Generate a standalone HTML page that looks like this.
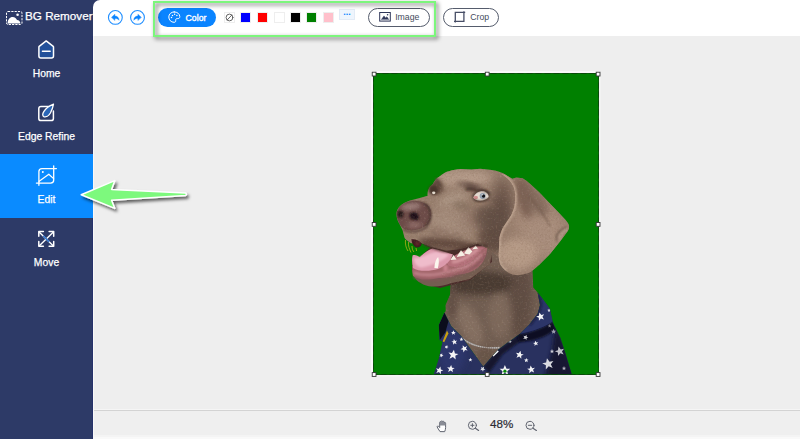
<!DOCTYPE html>
<html><head><meta charset="utf-8">
<style>
*{box-sizing:border-box;margin:0;padding:0}
html,body{width:800px;height:439px;overflow:hidden;background:#eee;font-family:"Liberation Sans",Arial,sans-serif}
#side{position:absolute;left:0;top:0;width:101px;height:439px;background:#2d3a67}
#top{position:absolute;left:93px;top:0;width:707px;height:36px;background:#fff;border-top-left-radius:7px}
#main{position:absolute;left:93px;top:36px;width:707px;height:403px;background:#eee}
#bot{position:absolute;left:93px;top:409px;width:707px;height:30px;background:linear-gradient(#f5f5f5 0,#f5f5f5 1px,#d3d3d3 1px,#d3d3d3 2px,#efefef 2px,#efefef 26px,#f4f4f4 26px,#f4f4f4 28px,#f9f9f9 28px)}
.logo{position:absolute;left:25px;top:8.4px;color:#fff;font-size:11.7px;white-space:nowrap;line-height:16px;-webkit-text-stroke:.25px #fff}
.item{position:absolute;left:0;width:93px;height:63px;color:#fff;text-align:center;font-size:10.35px}
.item span{position:absolute;left:0;width:93px;text-align:center;top:39.8px;line-height:12px;-webkit-text-stroke:.25px #fff}
.item svg{position:absolute}
.act{background:#0a8bff}
.abs{position:absolute}
.btn{position:absolute;top:8px;height:19px;border-radius:10px;font-size:8.7px;line-height:17px;color:#444b5c;border:1px solid #555c6c;background:#fff}
.sw{position:absolute;top:12px;width:11px;height:11px;border:1px solid #eee;background:#fff}
.sw i{position:absolute;left:0;top:0;width:9px;height:9px}
</style></head><body>
<div id="side"></div>
<div id="top"></div>
<div id="main"></div>
<div id="bot"></div>
<div class="abs" style="left:92px;top:36px;width:1px;height:403px;background:#26326a"></div><div class="abs" style="left:93px;top:36px;width:1px;height:403px;background:#f8f8f8"></div>

<!-- sidebar -->
<div class="logo">BG Remover</div>
<div class="item" style="top:28px"><span>Home</span></div>
<div class="item" style="top:91px"><span>Edge Refine</span></div>
<div class="item act" style="top:154.3px;height:63.3px"><span>Edit</span></div>
<div class="item" style="top:217px"><span>Move</span></div>


<!-- icons -->
<svg class="abs" style="left:0;top:0" width="93" height="290" viewBox="0 0 93 290" fill="none" stroke="#fff" stroke-linecap="round" stroke-linejoin="round">
<!-- logo -->
<rect x="6.5" y="11.5" width="15.5" height="13" rx="1.5" stroke-width="1" stroke-dasharray="2.2 1.1" stroke-linecap="butt"/>
<path d="M7.6 23.6 C7.6 19.5 10 17 12.6 17 C15 17 16.4 18.6 17 20 C19 20 20.4 21.6 20.4 23.6 Z" fill="#fff" stroke="none"/>
<circle cx="17.6" cy="14.7" r="1.3" fill="#fff" stroke="none"/>
<!-- home -->
<path d="M46.2 40.9 L53.2 46.4 Q53.5 46.7 53.5 47.2 L53.5 56 Q53.5 58 51.5 58 L40.9 58 Q38.9 58 38.9 56 L38.9 47.2 Q38.9 46.7 39.2 46.4 Z" fill="#22509a" stroke-width="1.5"/>
<path d="M42.4 51.3 H50.2" stroke-width="1.4"/>
<!-- edge refine -->
<path d="M49.5 106.4 H41 Q38.8 106.4 38.8 108.6 V118.4 Q38.8 120.6 41 120.6 H51.2 Q53.4 120.6 53.4 118.4 V111" stroke-width="1.5"/>
<path d="M53.5 104.1 C50.2 105.4 45.8 108.4 43.8 111.6 C42.3 114 42.4 116.2 43.8 116.7 C45.8 117.3 48.8 115.8 50.4 113 C52 110 53 107 53.5 104.1 Z" fill="#2a66b8" stroke-width="1.3"/>
<!-- edit -->
<path d="M56.4 168.6 H42 Q38.9 168.6 38.9 171.6 V185.3 M36.4 183.1 H50.6 Q53.7 183.1 53.7 180 V165.8" stroke-width="1.3"/>
<circle cx="42.8" cy="172.1" r="1" fill="#fff" stroke="none"/>
<path d="M39.2 181.3 L48.8 174.2 L53.6 178.6" stroke-width="1.2"/>
<!-- move -->
<path d="M39.6 232.4 L52.9 245.4 M52.9 232.4 L39.6 245.4" stroke-width="1.4"/>
<path d="M43.6 236.3 L46.2 238.9 L48.8 241.4" stroke="#3478d0" stroke-width="1.5"/>
<path d="M38.8 236.2 V231.6 H43.4 M49.1 231.6 H53.7 V236.2 M53.7 241.6 V246.2 H49.1 M43.4 246.2 H38.8 V241.6" stroke-width="1.5"/>
</svg>

<!-- toolbar -->
<div class="abs" style="left:158px;top:8px;width:58px;height:19px;border-radius:10px;background:#0a84ff;color:#fff;font-size:8.7px;line-height:19px;-webkit-text-stroke:.35px #fff"><span style="position:absolute;left:27.6px;top:.6px">Color</span></div>
<div class="sw" style="left:224px"></div>
<div class="sw" style="left:240px"><i style="background:#0000ff"></i></div>
<div class="sw" style="left:257px"><i style="background:#ff0000"></i></div>
<div class="sw" style="left:274px"><i style="background:#fff"></i></div>
<div class="sw" style="left:290px"><i style="background:#000"></i></div>
<div class="sw" style="left:306px"><i style="background:#008000"></i></div>
<div class="sw" style="left:323px"><i style="background:#ffc0cb"></i></div>
<div class="abs" style="left:339px;top:9px;width:16px;height:11px;background:#eef5fd;border:1px solid #e3ebf5;color:#0a84ff;font-size:9px;line-height:5px;text-align:center;font-weight:bold">...</div>
<div class="btn" style="left:368px;width:62px"><span style="position:absolute;left:26.2px">Image</span></div>
<div class="btn" style="left:443px;width:56px"><span style="position:absolute;left:26.3px">Crop</span></div>


<svg class="abs" style="left:100px;top:0" width="410" height="36" viewBox="100 0 410 36" fill="none" stroke-linecap="round" stroke-linejoin="round">
<!-- undo/redo -->
<circle cx="115.35" cy="17.4" r="6.9" stroke="#1f8eff" stroke-width="1.1"/>
<circle cx="137.5" cy="17.4" r="6.9" stroke="#1f8eff" stroke-width="1.1"/>
<path d="M111.6 17.2 L114.9 14.2 V16 C117.6 16.1 119 17.8 119 20.3 C118.2 19 117 18.5 114.9 18.5 V20.2 Z" fill="#0a84ff" stroke="#0a84ff" stroke-width=".4"/>
<path d="M141.2 17.2 L137.9 14.2 V16 C135.2 16.1 133.8 17.8 133.8 20.3 C134.6 19 135.8 18.5 137.9 18.5 V20.2 Z" fill="#0a84ff" stroke="#0a84ff" stroke-width=".4"/>
<!-- palette -->
<path d="M174.2 11.9 C171 11.9 168.8 14.2 168.8 17 C168.8 19.9 171 22.3 174 22.3 C175.4 22.3 175.9 21.5 175.7 20.6 C175.4 19.3 176.1 18.5 177.3 18.6 C179 18.8 179.8 18 179.8 16.6 C179.8 14 177.4 11.9 174.2 11.9 Z" stroke="#fff" stroke-width="1"/>
<g fill="#fff" stroke="none"><circle cx="171.5" cy="17.6" r=".75"/><circle cx="172.5" cy="15.4" r=".75"/><circle cx="174.6" cy="14.2" r=".75"/><circle cx="176.9" cy="15.6" r=".75"/></g>
<!-- no color -->
<circle cx="229.5" cy="17.5" r="3.4" stroke="#555" stroke-width=".9"/><path d="M227.2 19.9 L231.8 15.1" stroke="#555" stroke-width=".9"/>
<!-- image icon -->
<rect x="379.7" y="12.5" width="10.6" height="8.6" stroke="#2d3558" stroke-width="1" stroke-linejoin="miter"/>
<path d="M381.6 19.3 L384 15.9 L385.6 18 L386.9 16.8 L388.6 19.3 Z" fill="#2d3558" stroke="#2d3558" stroke-width=".5"/>
<circle cx="387.6" cy="14.7" r=".8" fill="#2d3558"/>
<!-- crop icon -->
<path d="M463.9 11.3 V21.3 H454 M455.3 22.6 V12.3 H465.2" stroke="#474e66" stroke-width="1.3" stroke-linecap="butt" stroke-linejoin="miter"/>
</svg>

<!-- highlight -->
<div class="abs" style="left:153px;top:1px;width:283.3px;height:36px;border:2px solid #7cf67c;filter:drop-shadow(2px 2px 2.2px rgba(0,0,0,.6))"></div>

<!-- canvas image -->
<svg class="abs" style="left:366px;top:66px" width="240" height="316" viewBox="366 66 240 316">
<defs>
<filter id="b1" x="-30%" y="-30%" width="160%" height="160%"><feGaussianBlur stdDeviation="1"/></filter>
<filter id="b2" x="-30%" y="-30%" width="160%" height="160%"><feGaussianBlur stdDeviation="2"/></filter>
<filter id="b3" x="-30%" y="-30%" width="160%" height="160%"><feGaussianBlur stdDeviation="3.5"/></filter>
<filter id="b5" x="-40%" y="-40%" width="180%" height="180%"><feGaussianBlur stdDeviation="6"/></filter>
<filter id="fur" x="0" y="0" width="100%" height="100%"><feTurbulence type="fractalNoise" baseFrequency=".55" numOctaves="2" seed="3" result="n"/><feColorMatrix in="n" type="matrix" values="0 0 0 0 .22  0 0 0 0 .13  0 0 0 0 .08  0 0 0 2.2 -1.05"/></filter>
<filter id="fur2" x="0" y="0" width="100%" height="100%"><feTurbulence type="fractalNoise" baseFrequency=".5" numOctaves="2" seed="8" result="n"/><feColorMatrix in="n" type="matrix" values="0 0 0 0 .88  0 0 0 0 .74  0 0 0 0 .62  0 0 0 2.2 -1.25"/></filter>
<clipPath id="cfur"><use href="#headp"/><use href="#earp"/><use href="#neckp"/></clipPath>
<path id="headp" d="M396.5 213 C397 208 401 203.5 410 200.4 L418.8 198.2 L427.6 195.7 C427 190 430 186 432.6 184.4 C435 180 437 178 440 176.3 C444 173 446 172 448.9 171.3 C453 169.8 457 169.2 460.2 169 L471.5 169.4 L480.2 168.8 L490 169.8 L495 170.6 C500 172 503 173 505 174.4 L512 178.8 L520 200 L512 240 L505 262 L487 248 L477.7 243.8 L460.2 248.9 L446.4 250.7 L431.4 247 L422 243.2 L411 243.2 C407 241 405 239 404.4 237.6 L402.5 230 L399.4 223.8 C397 220 396.3 216 396.5 213 Z"/>
<path id="earp" d="M512 178.8 L516.3 177.5 L522.6 178.2 C526 180 528 182 530 183.8 L538.9 192 L547.7 201.3 L557.7 211.4 L565.2 219.5 C568 223 569.5 225 569 226.8 C569 229 568.5 230 567.7 231.3 L560.2 241.3 L550.2 253.8 L540.2 263.9 L533.9 269.5 C530 272.5 528 273.5 525.2 273.8 C521 275.3 518 275.3 515.2 275 C511 274 508.5 273 506.4 271.3 C503 268.5 501 266 500 263.8 C498.6 259 498.6 256 498.8 252.6 L499.4 237.6 C500.5 233 502 229 503.8 226.3 L511.3 215 C514 209 515 205 515 202.6 C515.5 196 515 191 513.8 187.6 C511 181 506 176.5 501 174 L505 174.4 Z"/>
<path id="neckp" d="M450.8 283.2 L450 295 L445.6 305 L445.7 311.3 L444.4 312.5 L451.3 326.3 L461.4 336.3 L483.3 366.4 L497.7 350 L507.7 342.6 L520 333.8 L528.8 325 L537.6 313.8 L540 305 L537.6 292.5 L533.2 287.5 L532.5 269 L520 240 L480 250 L440 275 Z"/>
<path id="shirtp" d="M444.4 312.5 L438.8 325 L439.4 340 L442.6 341.4 L438.8 358.8 L433.6 374.5 L571.8 374.5 L565.2 352.6 L560.2 337.5 L553.9 325 L552.6 321.4 L550 308.8 L542.6 298.8 L537.6 292.5 L540 305 L537.6 313.8 L528.8 325 L520 333.8 L507.7 342.6 L497.7 350 L483.3 366.4 L461.4 336.3 L451.3 326.3 Z"/>
<clipPath id="chead"><use href="#headp"/></clipPath>
<clipPath id="cear"><use href="#earp"/></clipPath>
<clipPath id="cneck"><use href="#neckp"/></clipPath>
<clipPath id="cshirt"><use href="#shirtp"/></clipPath>
<clipPath id="cimg"><rect x="373" y="73" width="226" height="302"/></clipPath>
<path id="st" d="M0 -1 L0.29 -0.31 L0.95 -0.31 L0.42 0.12 L0.59 0.81 L0 0.4 L-0.59 0.81 L-0.42 0.12 L-0.95 -0.31 L-0.29 -0.31 Z"/>
</defs>
<!-- halo + green -->
<path d="M372 376 V72 H600" fill="none" stroke="#f8f8f8" stroke-width="2"/><path d="M600 72 V376 H372" fill="none" stroke="#f2f2f2" stroke-width="2"/>
<rect x="373" y="73" width="226" height="302" fill="#008000"/>
<g clip-path="url(#cimg)">
<!-- neck -->
<use href="#neckp" fill="#715e52"/>
<g clip-path="url(#cneck)">
<ellipse cx="478" cy="283" rx="40" ry="12" fill="#4a3b33" filter="url(#b3)"/>
<ellipse cx="520" cy="300" rx="12" ry="40" fill="#5b4a40" filter="url(#b3)" opacity=".8"/>
<ellipse cx="470" cy="325" rx="10" ry="22" fill="#8a7566" filter="url(#b3)" opacity=".8" transform="rotate(-25 470 325)"/>
<ellipse cx="500" cy="315" rx="12" ry="22" fill="#836e60" filter="url(#b3)" opacity=".7"/>
<ellipse cx="452" cy="300" rx="5" ry="18" fill="#5e4c42" filter="url(#b2)" opacity=".7"/>
<path d="M460.6 337 C467 342.4 474 345.6 482 347 C488 348 494 348.2 500 347.6" stroke="#8f8a88" stroke-width="1.7" fill="none"/><path d="M460.6 337 C467 342.4 474 345.6 482 347 C488 348 494 348.2 500 347.6" stroke="#d8d4d0" stroke-width="1" fill="none" stroke-dasharray="1.1 .9"/>
<ellipse cx="486" cy="358" rx="9" ry="10" fill="#665246" filter="url(#b2)" opacity=".8"/>
</g>
<!-- shirt -->
<use href="#shirtp" fill="#29315f"/>
<g clip-path="url(#cshirt)">
<path d="M556 322 L578 380 L544 380 L552 350 Z" fill="#14172e" filter="url(#b2)" opacity=".9"/>
<ellipse cx="452" cy="352" rx="14" ry="22" fill="#2f3970" filter="url(#b3)" opacity=".8"/>
<path d="M444.4 312.5 L438.8 325 L439.8 340 L445.5 332 L448.5 321 Z" fill="#0b0d1c"/>
<path d="M447 330.5 L442.6 341.6 L444.2 342.2 L448.4 333.6 Z" fill="#c9a010"/>
<path d="M483.3 366.4 L497.7 350 L520 333.8 L525 338 L503 354 L489 373 Z" fill="#12152e" filter="url(#b1)"/>
<path d="M517 335 C530 333 542 329 553.4 321.6 L556 329 C546 337 532 342 519 342 Z" fill="#0b0d20" filter="url(#b1)"/>
<path d="M537.6 292.5 L542.6 298.8 L550 308.8 L552.8 321.6 C546 326.4 534 331 520 333.8 L528.8 325 L537.6 313.8 L540 305 Z" fill="#2c3568"/>
<path d="M538.6 294 L541 305 L538.6 314 L530 325" stroke="#151935" stroke-width="1.6" fill="none" filter="url(#b1)"/>
<g fill="#f4f4f6">
<use href="#st" transform="translate(453.2 354.9) scale(5.3) rotate(8)"/>
<use href="#st" transform="translate(454.4 342) scale(3.1) rotate(-10)"/>
<use href="#st" transform="translate(453.4 332.7) scale(2.5)"/>
<use href="#st" transform="translate(464.3 348.7) scale(3.8) rotate(-25)"/>
<use href="#st" transform="translate(461.4 339.4) scale(2.1) rotate(10)"/>
<use href="#st" transform="translate(450.8 368.9) scale(4) rotate(5)"/>
<use href="#st" transform="translate(439.4 370.4) scale(4) rotate(15)"/>
<use href="#st" transform="translate(470.4 359.8) scale(2.1)"/>
<use href="#st" transform="translate(446.5 347) scale(2.1) rotate(20)"/>
<use href="#st" transform="translate(441.4 355.4) scale(2.2) rotate(20)"/>
<use href="#st" transform="translate(504.9 370.6) scale(5.6) rotate(0)"/>
<use href="#st" transform="translate(519.6 354.9) scale(4.2) rotate(12)"/>
<use href="#st" transform="translate(535.8 343.4) scale(2.8) rotate(-10)"/>
<use href="#st" transform="translate(525.6 337.4) scale(2.8) rotate(20)" opacity=".85"/>
<use href="#st" transform="translate(526.3 360.3) scale(2.4)"/>
<use href="#st" transform="translate(531.2 369.6) scale(4.2) rotate(-8)"/>
<use href="#st" transform="translate(548.2 364) scale(6) rotate(-12)" opacity=".88"/>
<use href="#st" transform="translate(559.8 351.4) scale(5) rotate(-15)" opacity=".78"/>
<use href="#st" transform="translate(552 351.4) scale(2.3)" opacity=".8"/>
<use href="#st" transform="translate(564 368.4) scale(2.3)" opacity=".7"/>
<use href="#st" transform="translate(510 341.5) scale(2) rotate(10)" opacity=".7"/>
<use href="#st" transform="translate(540.5 316.7) scale(4.4) rotate(-15)"/>
<use href="#st" transform="translate(549 310.4) scale(1.9)" opacity=".85"/>
<use href="#st" transform="translate(553.6 331.6) scale(2.8)" opacity=".6"/>
<use href="#st" transform="translate(549.6 326) scale(2)" opacity=".5"/>
<use href="#st" transform="translate(482.7 369) scale(2.8) rotate(30)" opacity=".85"/>
<path d="M492.4 355.4 L497.6 350.2 L498.8 351.4 L493.6 356.6 Z"/>
</g>
<circle cx="504.9" cy="371.2" r="1.6" fill="#0a8a0a"/>
</g>
<!-- mouth interior -->
<path d="M411 243 L490 243 L492 262 L470 280 L440 288 L420 283 L412 270 L412.7 255 L419.5 257.5 L430.3 247.5 L422 243.2 Z" fill="#4a2c2a"/>
<!-- lower jaw fur -->
<path d="M412.2 270 C413 277 417 281 420 282.6 C425 286 429 286.6 432.6 286.4 C440 286.5 446 285 450.8 283.2 L470 279 L490 264 L493 246 L484 248 L470 262 L440 270 Z" fill="#745d51"/>
<!-- gums inner -->
<path d="M446 262 C452 256 462 251 474 246.5 L485 246 C486 254 480 264 468 270 L452 274 Z" fill="#b4707a"/>
<path d="M452 262 C460 262 470 256 478 249" stroke="#d3969c" stroke-width="3" fill="none" filter="url(#b1)"/>
<!-- lower lip mass -->
<path d="M412.4 266 C420 271 430 270 438 268 L446 263 C448 266 452 267.5 458 267 C468 265 476 259 481 250 L487 246.5 C487.4 254 484 262 479 266.5 C475 270 470 272.4 465 273.4 L456 275 C450 277.4 444 278.2 439 278 C432 279.6 426 279.8 422 279.4 C417 278.4 414 277 413 276 C412.3 273 412.2 269 412.4 266 Z" fill="#a4676c"/>
<path d="M414 273 C424 276 438 275 450 271 C462 269.5 474 264 482 254" stroke="#c48890" stroke-width="2.2" fill="none" filter="url(#b1)"/>
<path d="M413.5 277 C422 281 438 280.4 452 276.4 C466 273 478 268 486 254" stroke="#84545a" stroke-width="1.6" fill="none" filter="url(#b1)"/>
<ellipse cx="445.5" cy="268" rx="2.2" ry="3.6" fill="#c9848e" filter="url(#b1)"/>
<!-- tongue -->
<path d="M412.7 255.2 C416 254.5 418 256 419.8 257.2 C424 253 428 250 432.3 248.4 C440 250 447 252.5 453 254.6 L450 260 C447 264 443 267 438 269 C430 271.6 418 271.6 413 268 C411.8 263 411.9 258 412.7 255.2 Z" fill="#dc9aac"/>
<path d="M414 258 C420 259 428 253 436 252 C442 252.4 446 253.4 449 255 C444 260 434 265 422 267.6 C416 267 413.6 262 414 258 Z" fill="#efbccb" filter="url(#b1)"/>
<!-- teeth -->
<path d="M434.4 268 C434.6 262.6 436 258.8 438.2 257 C439.2 260 439 264.4 437.8 268.2 Z" fill="#fbf7ee"/>
<path d="M450.5 260 L453.5 255 L456.5 259.4 Z M456.6 257 L461 250 L465.2 255.6 Z M464 253.4 L468.4 247 L472.4 251.4 L469.4 254.4 Z M472 249.6 L475.6 245.4 L478 248.6 Z" fill="#f6f0e4"/>
<!-- head -->
<use href="#headp" fill="#987f6e"/>
<g clip-path="url(#chead)">
<ellipse cx="462" cy="178" rx="30" ry="8" fill="#b39a88" filter="url(#b3)"/>
<ellipse cx="452" cy="222" rx="26" ry="14" fill="#a48c7c" filter="url(#b5)"/>
<ellipse cx="503" cy="212" rx="10" ry="34" fill="#6d574b" filter="url(#b5)"/>
<ellipse cx="492" cy="238" rx="14" ry="14" fill="#6a5347" filter="url(#b3)"/>
<ellipse cx="448" cy="244" rx="30" ry="5.5" fill="#634c41" filter="url(#b2)" transform="rotate(6 448 244)"/>
<ellipse cx="470" cy="186" rx="14" ry="3.6" fill="#7d6558" filter="url(#b2)" transform="rotate(12 470 186)"/>
<ellipse cx="437" cy="186.5" rx="6" ry="8" fill="#614a3e" filter="url(#b2)" transform="rotate(-20 437 186.5)"/>
<ellipse cx="453" cy="199" rx="15" ry="6" fill="#ab9483" filter="url(#b3)" transform="rotate(-18 453 199)"/>
<ellipse cx="476" cy="218" rx="14" ry="10" fill="#8a7062" filter="url(#b5)" opacity=".8"/>
<ellipse cx="487" cy="205" rx="10" ry="4" fill="#b0927f" filter="url(#b2)" opacity=".7" transform="rotate(20 487 205)"/>
<ellipse cx="440" cy="232" rx="12" ry="4" fill="#8b7163" filter="url(#b2)" opacity=".6" transform="rotate(14 440 232)"/>
<ellipse cx="486" cy="217" rx="11" ry="12" fill="#6a564b" filter="url(#b3)" opacity=".85"/>
<ellipse cx="497" cy="226" rx="13" ry="30" fill="#5c493f" filter="url(#b5)" opacity=".75"/>
<ellipse cx="462" cy="206" rx="10" ry="4" fill="#84705f" filter="url(#b2)" opacity=".6" transform="rotate(20 462 206)"/>
<path d="M432 232 C440 238 450 238 458 233" stroke="#7a6255" stroke-width="1.2" fill="none" filter="url(#b1)" opacity=".8"/>
<path d="M430 237 C440 242.5 452 242 462 236" stroke="#735b4f" stroke-width="1.2" fill="none" filter="url(#b1)" opacity=".8"/>
<!-- nose -->
<path d="M396.5 214 C397 207.5 402 203.4 409 201.6 C417 200 425 202 429 206.5 C432.5 211 432 220 427 225 C421 230 411 232 404 229 C399 225.5 396.3 220 396.5 214 Z" fill="#6c4b48"/>
<ellipse cx="411" cy="206.5" rx="10" ry="3.4" fill="#9c7f7a" filter="url(#b2)" transform="rotate(-8 411 206.5)"/>
<ellipse cx="414" cy="225" rx="8" ry="3" fill="#8f6c68" filter="url(#b2)"/>
<ellipse cx="400.4" cy="214.2" rx="3" ry="3.4" fill="#231415" filter="url(#b1)"/>
<path d="M409.8 214.4 C411 211.8 414.8 211.6 416.8 213.2 C418.6 215 419.4 217.8 418.4 219.4 C415.6 220.6 412 220.2 410.4 218 C409.6 216.6 409.4 215.4 409.8 214.4 Z" fill="#1e1112" filter="url(#b1)"/><path d="M401 202.6 C408 200.6 418 200.4 425 203.4" stroke="#5a413c" stroke-width="1.4" fill="none" filter="url(#b1)"/>
<path d="M424.5 203.5 C431.5 208 432.8 219 426 226.5" stroke="#4f3a34" stroke-width="2.4" fill="none" filter="url(#b1)"/>
<path d="M403 229.5 C410 233.4 420 232 427 226.5" stroke="#5e4640" stroke-width="2" fill="none" filter="url(#b1)"/>
<path d="M406 214 C406.5 220 407.5 224 409 227" stroke="#6d4f4b" stroke-width="1.2" fill="none" filter="url(#b1)"/>
</g>
<path d="M424 244.4 C428 246 430 246.6 431.4 247.4 C440 250.6 446 251.6 450.5 251.6 C456 251 460 249.6 464 248.2 C470 246 474 244.6 478 244.4 L487 246" stroke="#46302a" stroke-width="1.8" fill="none" filter="url(#b1)" stroke-linecap="round"/>
<!-- mouth corner dark -->
<path d="M411.2 239.4 C414 238.6 419 240 421.8 243.4 C421.4 246 419 247.6 416.6 247.4 C414 246.6 412 243.6 411.2 239.4 Z" fill="#3f1d20"/>
<ellipse cx="417.4" cy="243.8" rx="2.2" ry="1.5" fill="#6e2a2e" filter="url(#b1)"/>
<!-- ear -->
<use href="#earp" fill="#987e6d"/>
<g clip-path="url(#cear)">
<ellipse cx="540" cy="225" rx="22" ry="36" fill="#a88d7b" filter="url(#b5)" transform="rotate(-25 540 225)"/>
<ellipse cx="524" cy="198" rx="7" ry="22" fill="#7b6153" filter="url(#b3)" transform="rotate(-12 524 198)"/>
<ellipse cx="518" cy="254" rx="20" ry="16" fill="#b59a86" filter="url(#b3)"/>
<ellipse cx="534" cy="200" rx="9" ry="20" fill="#7c6456" filter="url(#b3)" opacity=".8" transform="rotate(-42 534 200)"/>
<path d="M528 196 C536 204 544 214 550 226" stroke="#6f584b" stroke-width="1.5" fill="none" filter="url(#b1)" opacity=".7"/>
<path d="M501 174 C506 176.5 511 181 513.8 187.6 C515 191 515.5 196 515 202.6 C515 205 514 209 511.3 215 L503.8 226.3 C502 229 500.5 233 499.4 237.6 L498.8 252.6 C498.6 256 498.6 259 500 263.8 C501 266 503 268.5 506.4 271.3" stroke="#c2a894" stroke-width="3.2" fill="none" filter="url(#b1)"/>
<path d="M567.5 227 C562 229 557.5 232 556.6 236 C556.3 238.5 556.6 240 557.4 241.5" stroke="#5c483e" stroke-width="1.3" fill="none" filter="url(#b1)"/>
<path d="M568.5 228 C564 230.5 560 234 559 240" stroke="#b9a292" stroke-width="1.6" fill="none" filter="url(#b1)"/>
</g>
<g clip-path="url(#cfur)"><rect x="390" y="165" width="185" height="205" filter="url(#fur)" opacity=".28"/><rect x="390" y="165" width="185" height="205" filter="url(#fur2)" opacity=".22"/></g>
<!-- eyes -->
<ellipse cx="433.4" cy="190" rx="4.4" ry="5" fill="#46342c" filter="url(#b1)" transform="rotate(-25 433.4 190)"/>
<path d="M435.6 178.4 C437 180 438.6 183 440.6 186" stroke="#5a463c" stroke-width="2" fill="none" filter="url(#b1)"/>
<ellipse cx="433.7" cy="192.8" rx="1.7" ry="1.4" fill="#e2d9cc"/>
<ellipse cx="471.5" cy="187.6" rx="7" ry="3.4" fill="#5e4a40" filter="url(#b2)" transform="rotate(14 471.5 187.6)" opacity=".9"/>
<ellipse cx="481" cy="195.8" rx="9" ry="6" fill="#5a463d" filter="url(#b1)" transform="rotate(-8 481 195.8)"/>
<path d="M473.4 197.6 C475 193 479.6 190.4 484.6 191.2 C487.4 192.4 488.8 195 488.6 197 C486.6 200.2 482 201 478 200.6 C475.6 200 474 199 473.4 197.6 Z" fill="#e3dad1"/>
<ellipse cx="475.8" cy="197.6" rx="2.2" ry="1.8" fill="#d08f8e"/>
<circle cx="482.6" cy="196" r="3" fill="#929fac"/>
<circle cx="483.5" cy="196.1" r="1.7" fill="#121318"/>
<circle cx="482.2" cy="194.8" r=".6" fill="#fff"/>
<path d="M466 189.4 C470 188.6 474 189.4 477 190.6 C481 189.4 486 190.4 489.6 194" stroke="#3a2a24" stroke-width="1.5" fill="none" filter="url(#b1)"/>
<path d="M474 199.6 C478 202 484 202 488.6 198.6" stroke="#4a372f" stroke-width="1.2" fill="none" filter="url(#b1)"/>
<!-- drool -->
<path d="M405.5 240 C405 244 406 248 408 251 M408.5 242 C408 246 409.5 249 411 252.5 M412 246 C412 249 413 251 414 252 M416 248 L416.6 251" stroke="#c9b81e" stroke-width=".7" fill="none"/>
</g>
<!-- border -->
<rect x="373.5" y="73.5" width="225" height="301" fill="none" stroke="#0a3a0a" stroke-width="1" stroke-dasharray="6 3" opacity=".85"/>
<rect x="373.5" y="73.5" width="225" height="301" fill="none" stroke="#0c4d0c" stroke-width="1" opacity=".6"/>
<!-- handles -->
<g fill="#fff" stroke="#333" stroke-width=".9">
<rect x="372.2" y="72.2" width="3.8" height="3.8"/><rect x="485.3" y="72.2" width="3.8" height="3.8"/><rect x="596.2" y="72.2" width="3.8" height="3.8"/>
<rect x="372.2" y="222.5" width="3.8" height="3.8"/><rect x="596.2" y="222.5" width="3.8" height="3.8"/>
<rect x="372.2" y="372.6" width="3.8" height="3.8"/><rect x="485.3" y="372.6" width="3.8" height="3.8"/><rect x="596.2" y="372.6" width="3.8" height="3.8"/>
</g>
</svg>

<!-- bottom -->
<div class="abs" style="left:490px;top:417.4px;font-size:11.6px;color:#2b2b33;line-height:14px;-webkit-text-stroke:.2px #2b2b33">48%</div>


<svg class="abs" style="left:430px;top:412px" width="115" height="26" viewBox="430 412 115 26" fill="none" stroke="#60646f" stroke-linecap="round" stroke-linejoin="round">
<!-- hand -->
<path d="M439.8 431.3 C438.6 429.6 437.8 428.2 437.2 427 C436.9 426.2 437.9 425.6 438.6 426.3 L439.7 427.6 V422.4 C439.7 421.4 441.1 421.4 441.1 422.4 V421.6 C441.1 420.6 442.6 420.6 442.6 421.6 V422 C442.6 421.1 444.1 421.1 444.1 422 V423 C444.1 422.2 445.6 422.2 445.6 423.1 V427.6 C445.6 429.2 445.2 430.2 444.8 431.3 Z" fill="#fff" stroke-width="1"/>
<path d="M439.9 425.6 V422.4 C439.9 421.6 441 421.6 441.1 422.4 V421.7 C441.2 420.9 442.5 420.9 442.6 421.7 V422.1 C442.7 421.4 444 421.4 444.1 422.1 V423 C444.2 422.5 445.4 422.5 445.5 423.2 V425.6 Z" fill="#8a8d96" stroke="none"/>
<!-- zoom in -->
<circle cx="472.4" cy="425.3" r="4" stroke-width="1"/><path d="M475.4 428.2 L478.6 430.4" stroke-width="1.2"/><path d="M470.8 425.3 H474 M472.4 423.7 V426.9" stroke-width="1"/>
<!-- zoom out -->
<circle cx="530" cy="425.3" r="4" stroke-width="1"/><path d="M533 428.2 L536.4 430.4" stroke-width="1.2"/><path d="M528.3 425.3 H531.7" stroke-width="1"/>
</svg>

<!-- arrow -->
<svg class="abs" style="left:70px;top:165px" width="140" height="70" viewBox="70 165 140 70">
<defs><filter id="ash" x="-20%" y="-20%" width="140%" height="160%"><feDropShadow dx="2" dy="2.6" stdDeviation="1.8" flood-color="#000" flood-opacity=".6"/></filter></defs>
<path d="M81.2 194.7 L114.8 180.6 L111.6 189.4 L185.6 192.9 Q187.2 194.2 185.6 195.5 L111.6 200.2 L114.8 208.4 Z" fill="#7df97d" stroke="#fff" stroke-width="1.5" stroke-linejoin="round" filter="url(#ash)"/>
</svg>
</body></html>
